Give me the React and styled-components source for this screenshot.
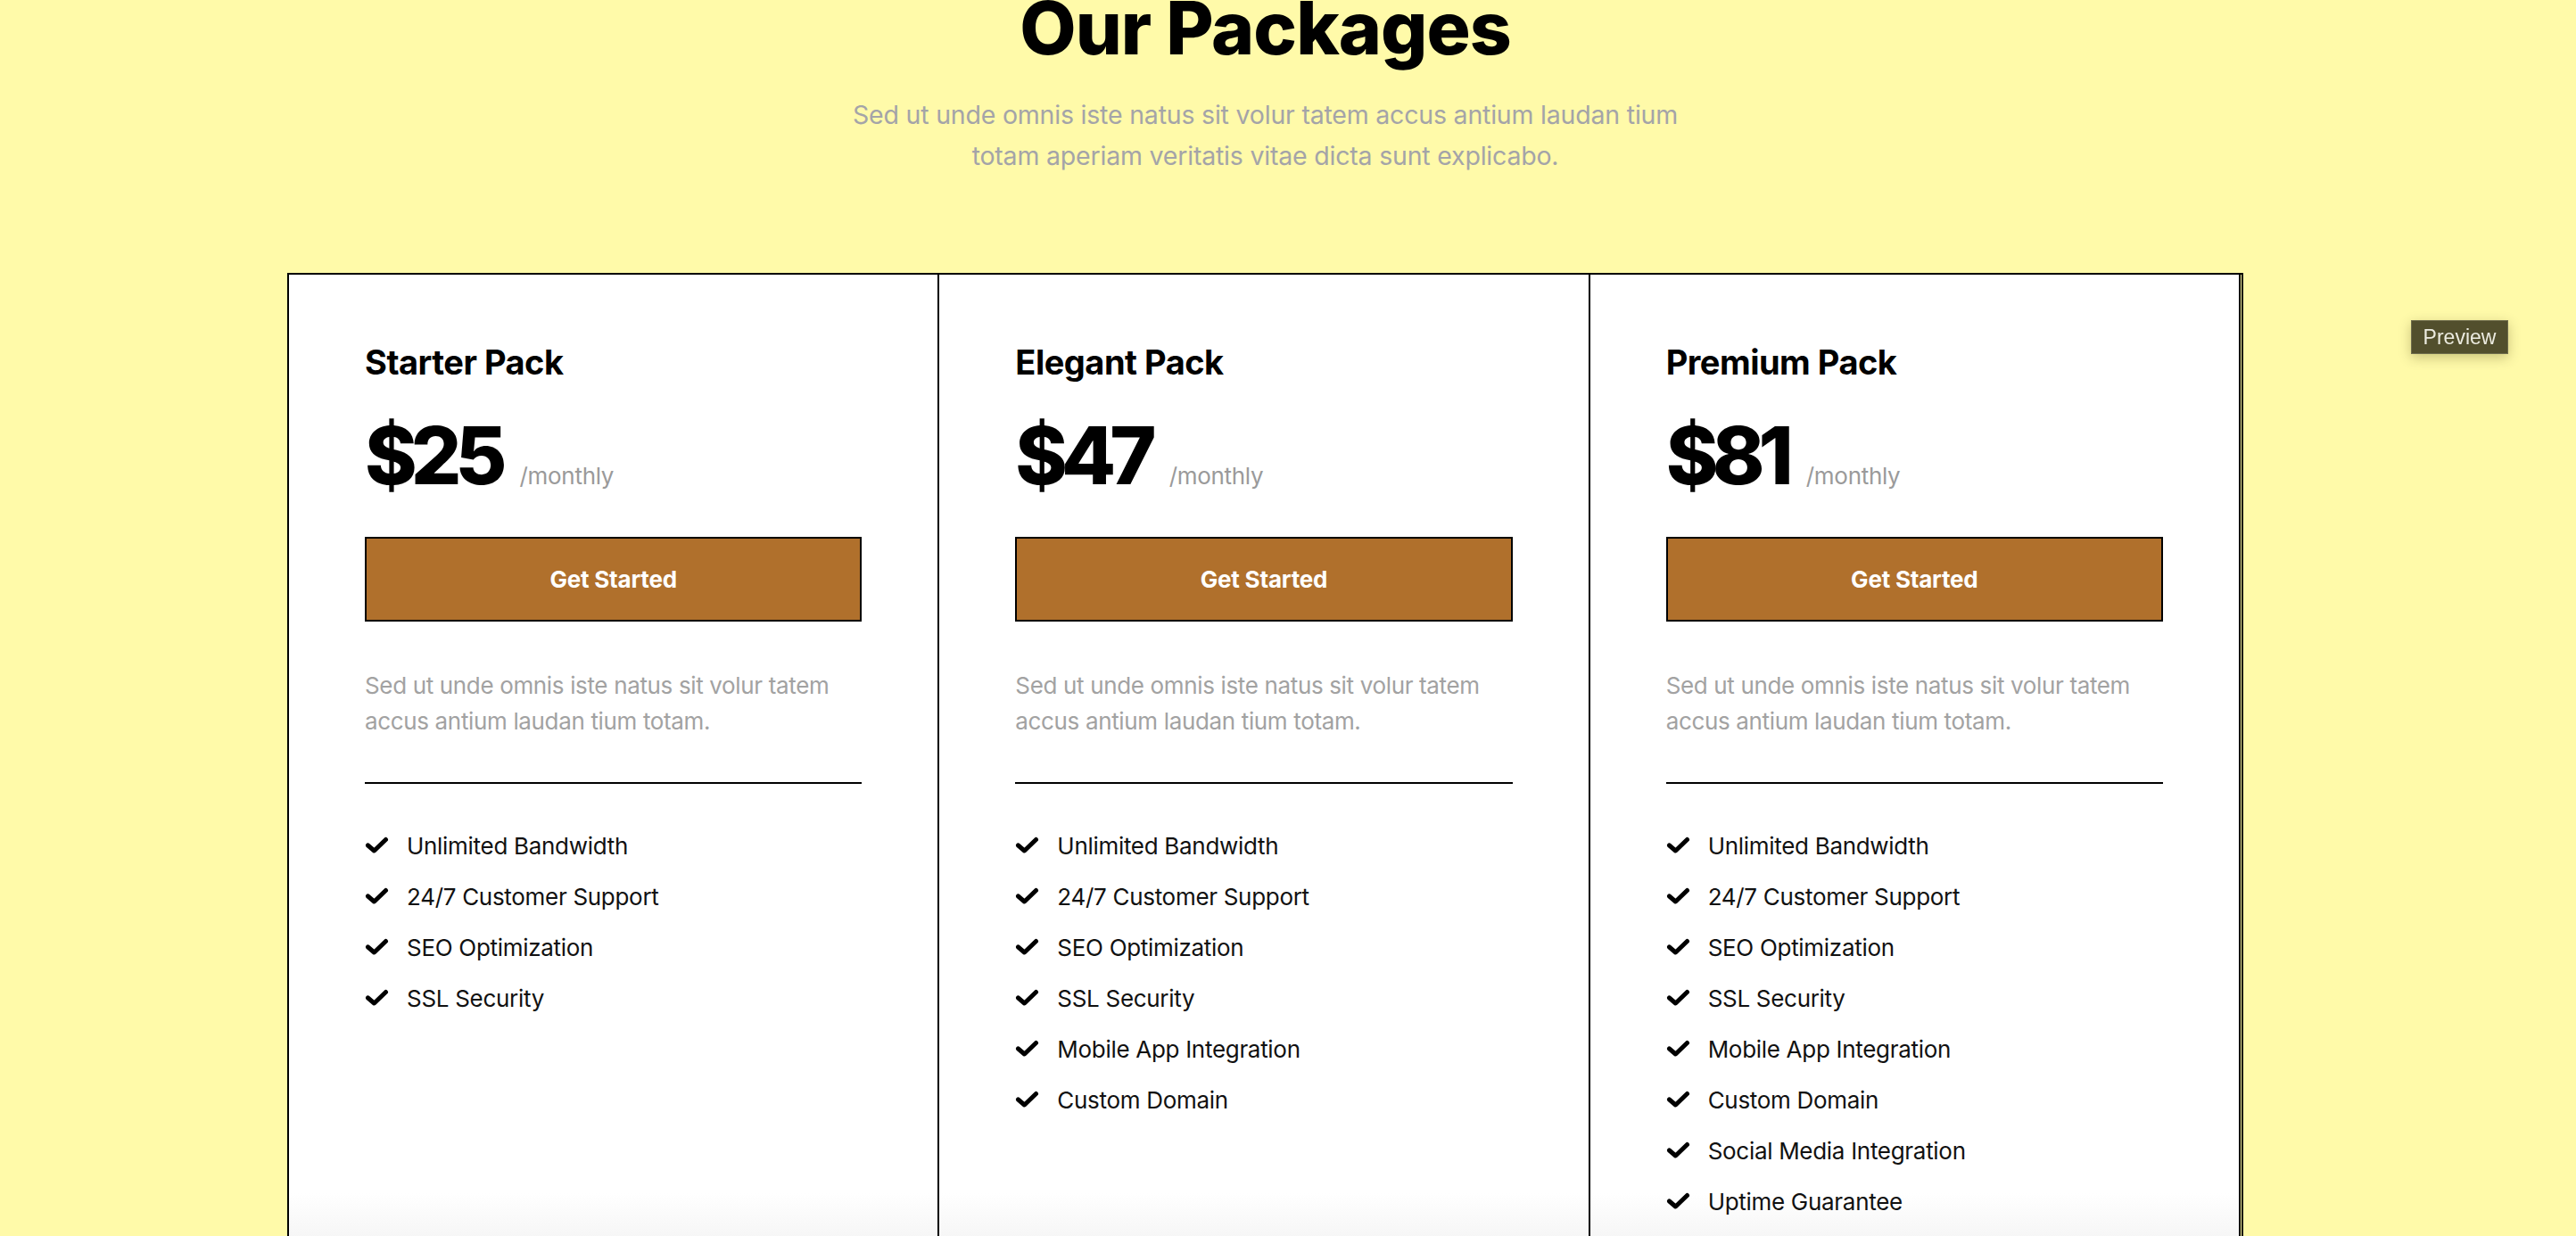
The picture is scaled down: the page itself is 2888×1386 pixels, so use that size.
import React from "react";
import styled, { createGlobalStyle } from "styled-components";

const GlobalStyle = createGlobalStyle`
  html, body {
    margin: 0;
    padding: 0;
    background: #fffaa9;
    overflow: hidden;
  }
  body {
    font-family: Inter, "Noto Sans", sans-serif;
    color: #000;
  }
  * { box-sizing: border-box; }
`;

const Page = styled.div`
  width: 2888px;
  height: 1386px;
  padding-right: 51px;
  overflow: hidden;
  background: #fffaa9;
`;

const Header = styled.header`
  margin-top: -13px;
  display: flex;
  flex-direction: column;
  align-items: center;
  text-align: center;
`;

const Title = styled.h1`
  margin: 0;
  font-size: 82px;
  line-height: 1.1;
  font-weight: 800;
  letter-spacing: -1px;
`;

const Subtitle = styled.p`
  margin: 29px 0 0;
  max-width: 1000px;
  font-size: 28.5px;
  line-height: 46px;
  color: #a4a4a8;
  font-weight: 400;
  letter-spacing: -0.2px;
`;

const Grid = styled.div`
  margin: 108px auto 0;
  width: 2193px;
  display: grid;
  grid-template-columns: repeat(3, 1fr);
  border: 2px solid #000;
  border-bottom: none;
  padding-right: 1px;
`;

const Card = styled.div`
  border-right: 2px solid #000;
  padding: 76px 85px 40px;
  background: linear-gradient(to bottom, #ffffff 0, #ffffff 1030px, #f6f6f6 1080px);
  display: flex;
  flex-direction: column;
`;

const CardTitle = styled.h3`
  margin: 0;
  font-size: 38px;
  line-height: 1.2;
  font-weight: 700;
  letter-spacing: -0.5px;
`;

const PriceRow = styled.div`
  margin-top: 36px;
  display: flex;
  align-items: baseline;
  gap: 21px;
`;

const Price = styled.span`
  font-size: 89px;
  line-height: 1;
  font-weight: 800;
  letter-spacing: -7px;
`;

const Period = styled.span`
  font-size: 26px;
  color: #9a9a9a;
  letter-spacing: -0.3px;
`;

const Button = styled.button`
  margin-top: 47px;
  height: 95px;
  width: 100%;
  border: 2px solid #000;
  background: #b0702c;
  color: #fff;
  font-family: inherit;
  font-size: 26px;
  font-weight: 700;
  letter-spacing: -0.2px;
  cursor: pointer;
`;

const Description = styled.p`
  margin: 52px 0 0;
  font-size: 26px;
  line-height: 40px;
  color: #a2a2a2;
  letter-spacing: -0.35px;
`;

const Divider = styled.hr`
  margin: 48px 0 0;
  border: none;
  height: 2px;
  background: #000;
`;

const Features = styled.ul`
  list-style: none;
  margin: 51px 0 0;
  padding: 0;
  display: flex;
  flex-direction: column;
  gap: 20px;
`;

const Feature = styled.li`
  display: flex;
  align-items: center;
  gap: 20px;
  font-size: 26px;
  line-height: 37px;
  color: #111;
  letter-spacing: -0.3px;
`;

const CheckIcon = styled.svg`
  width: 27px;
  height: 19px;
  flex: none;
  margin-top: -1px;
`;

const Badge = styled.div`
  position: fixed;
  top: 359px;
  right: 76px;
  width: 109px;
  height: 38px;
  display: flex;
  align-items: center;
  justify-content: center;
  background: #524f2d;
  border: 1px solid #6e6c4c;
  color: #ecebe0;
  font-family: "Liberation Sans", Arial, sans-serif;
  font-size: 23px;
  box-shadow: 0 4px 14px rgba(60, 55, 0, 0.28);
`;

const Check = () => (
  <CheckIcon viewBox="0 0 27 19" aria-hidden="true">
    <polyline
      points="3.5,10 10.5,16 23.5,3.5"
      fill="none"
      stroke="#000"
      strokeWidth="5"
      strokeLinecap="round"
      strokeLinejoin="round"
    />
  </CheckIcon>
);

const allFeatures = [
  "Unlimited Bandwidth",
  "24/7 Customer Support",
  "SEO Optimization",
  "SSL Security",
  "Mobile App Integration",
  "Custom Domain",
  "Social Media Integration",
  "Uptime Guarantee",
];

const packs = [
  { name: "Starter Pack", price: "$25", count: 4 },
  { name: "Elegant Pack", price: "$47", count: 6 },
  { name: "Premium Pack", price: "$81", count: 8 },
];

export default function App() {
  return (
    <Page>
      <GlobalStyle />
      <Header>
        <Title>Our Packages</Title>
        <Subtitle>
          Sed ut unde omnis iste natus sit volur tatem accus antium laudan tium
          totam aperiam veritatis vitae dicta sunt explicabo.
        </Subtitle>
      </Header>
      <Grid>
        {packs.map((p) => (
          <Card key={p.name}>
            <CardTitle>{p.name}</CardTitle>
            <PriceRow>
              <Price>{p.price}</Price>
              <Period>/monthly</Period>
            </PriceRow>
            <Button>Get Started</Button>
            <Description>
              Sed ut unde omnis iste natus sit volur tatem accus antium laudan
              tium totam.
            </Description>
            <Divider />
            <Features>
              {allFeatures.slice(0, p.count).map((f) => (
                <Feature key={f}>
                  <Check />
                  {f}
                </Feature>
              ))}
            </Features>
          </Card>
        ))}
      </Grid>
      <Badge>Preview</Badge>
    </Page>
  );
}
